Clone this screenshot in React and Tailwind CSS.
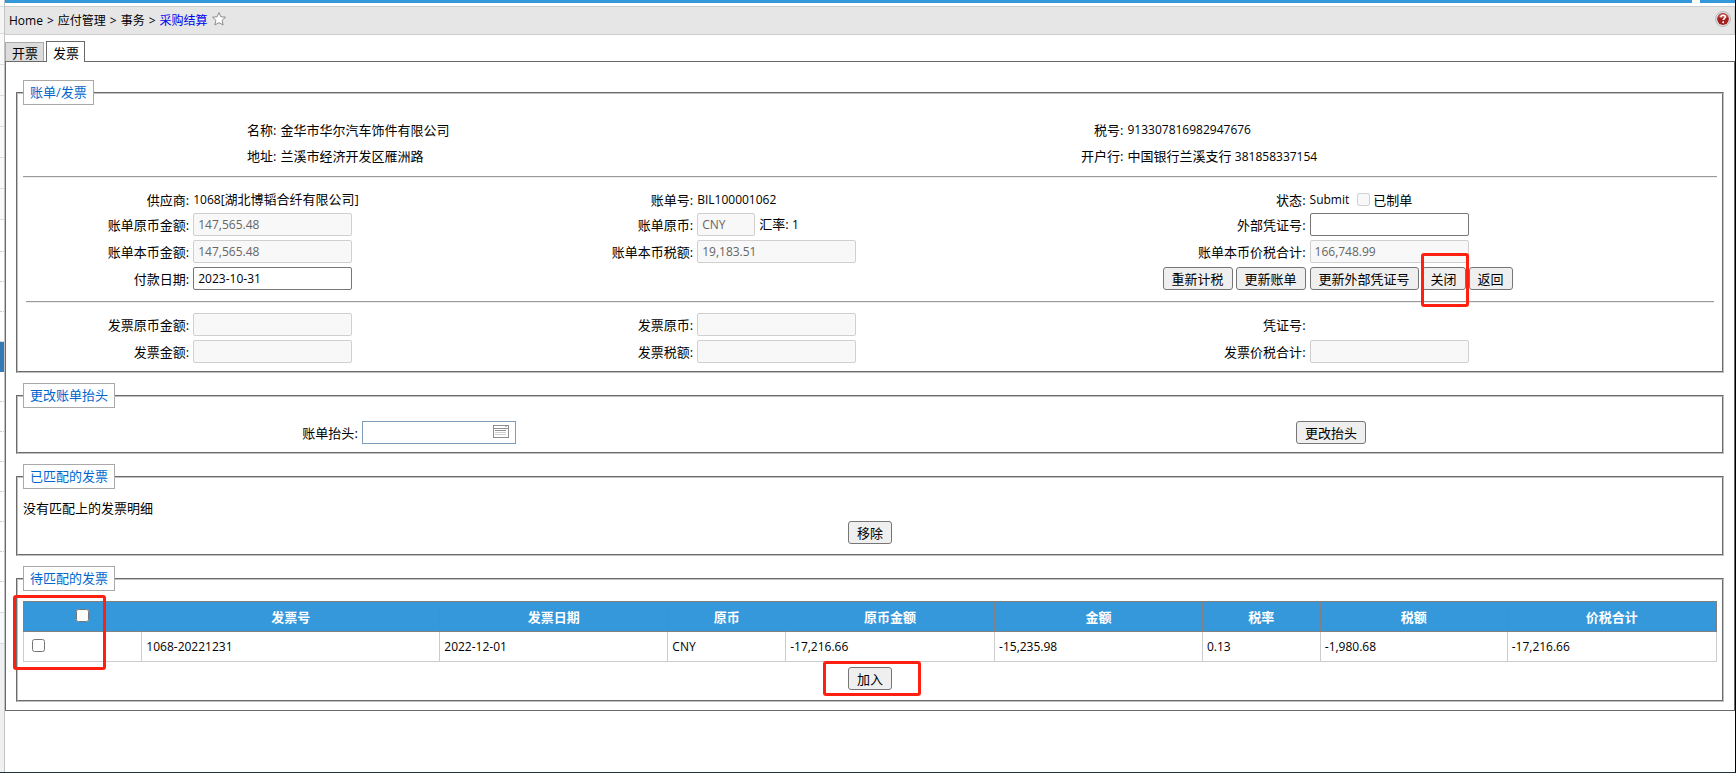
import React from "react";

const FONT = "font-['Open_Sans','Noto_Sans_CJK_SC',sans-serif]";

const COLUMNS = [
  { title: "发票号", width: "w-[17.6%]", value: "1068-20221231" },
  { title: "发票日期", width: "w-[13.47%]", value: "2022-12-01" },
  { title: "原币", width: "w-[6.96%]", value: "CNY" },
  { title: "原币金额", width: "w-[12.34%]", value: "-17,216.66" },
  { title: "金额", width: "w-[12.28%]", value: "-15,235.98" },
  { title: "税率", width: "w-[6.96%]", value: "0.13" },
  { title: "税额", width: "w-[11.04%]", value: "-1,980.68" },
  { title: "价税合计", width: "w-[12.36%]", value: "-17,216.66" },
];

function SideStrip() {
  return (
    <div aria-hidden="true" className="flex w-[5px] shrink-0 flex-col border-r border-[#c3c3c3] bg-[#f0f0f0]">
      <div className="h-[7px] border-b border-[#ddd] bg-white" />
      <div className="h-[27px] border-b border-[#ddd] bg-[#f5f5f5]" />
      {[0, 1, 2, 3, 4, 5].map((i) => (
        <div key={i} className="h-[31px] border-b border-[#ddd] bg-[#f9f9f9]" />
      ))}
      <div className="bg-white pt-0.5">
        {[0, 1, 2, 3].map((i) => (
          <div key={i} className="h-[30px] border-b border-dotted border-[#ccc]" />
        ))}
      </div>
      <div className="h-[30px] bg-[#337ab7]" />
      {[0, 1, 2, 3, 4, 5, 6].map((i) => (
        <div key={i} className="h-[30px] border-b border-dotted border-[#ccc] bg-white" />
      ))}
      <div className="h-[31px] border-b border-[#ddd] bg-white" />
      <div className="h-[31px] border-b border-[#ddd] bg-[#f9f9f9]" />
    </div>
  );
}

function StarIcon() {
  return (
    <svg viewBox="0 0 14 14" className="size-[14px]" fill="#fff" stroke="#8c8c8c" strokeLinejoin="round">
      <path d="M7 .6l1.900 4.200 4.600.4-3.400 3.100 1 4.700L7 10.600l-4.100 2.400 1-4.700L.5 5.200l4.600-.4z" />
    </svg>
  );
}

function HelpIcon() {
  return (
    <svg viewBox="0 0 16 16" className="size-4">
      <circle cx="8" cy="8" r="7.4" fill="#e9e9ec" stroke="#a9abae" strokeWidth=".9" />
      <circle cx="8" cy="8" r="5.9" fill="#a3201f" />
      <path d="M3 6a5.4 5.4 0 0 1 10 0c-2.500 1.200-7.500 1.200-10 0z" fill="#c25a58" />
      <path d="M5.900 6.300c0-1.300.9-2.100 2.200-2.100s2.200.8 2.200 1.900c0 1.500-2 1.500-2 3" fill="none" stroke="#fff" strokeWidth="1.600" />
      <circle cx="8.200" cy="11.300" r="1" fill="#fff" />
    </svg>
  );
}

function LookupIcon() {
  return (
    <svg viewBox="0 0 16 14" className="h-[14px] w-4" fill="none" shapeRendering="crispEdges">
      <path d="M.5.5h15v12H.5z" fill="#fff" stroke="#8e8e8e" />
      <path d="M1 3.500h14" stroke="#8e8e8e" />
      <path d="M12 1.500h2" stroke="#bbb" />
      <path d="M2 5.500h11" stroke="#8e8e8e" />
      <path d="M2 7.500h11M2 9.500h11" stroke="#cfcfcf" />
    </svg>
  );
}

function En({ children }) {
  return <span className="text-[12px]">{children}</span>;
}

function Button({ children }) {
  return (
    <button type="button" className="h-[23px] shrink-0 whitespace-nowrap rounded-[3px] border border-[#767676] bg-[#efefef] px-2 text-[13px] leading-5 text-black">
      {children}
    </button>
  );
}

function Marker({ className }) {
  return <div aria-hidden="true" className={`pointer-events-none absolute rounded-[3px] border-3 border-[#ff2012] ${className}`} />;
}

function TextBox({ id, width = "w-[159px]", value = "", disabled = true }) {
  return (
    <input
      id={id}
      type="text"
      defaultValue={value}
      disabled={disabled}
      className={`h-[23px] ${width} rounded-[2px] border border-[#767676] bg-white px-1 text-xs text-black disabled:border-[#d0d0d0] disabled:bg-[#f8f8f8] disabled:text-[#666]`}
    />
  );
}

function Label({ htmlFor, children }) {
  const Tag = htmlFor ? "label" : "span";
  return (
    <Tag htmlFor={htmlFor} className="whitespace-nowrap pr-1 text-right">
      {children}:
    </Tag>
  );
}

function Rule({ className }) {
  return <hr className={`h-[2px] border-t border-b border-t-[#9a9a9a] border-b-[#eee] ${className}`} />;
}

function Row({ className = "h-[27px]", children }) {
  return (
    <div className={`grid grid-cols-[10.05%_19.75%_10%_25.15%_11%_1fr] items-center ${className}`}>{children}</div>
  );
}

function Section({ title, className, children }) {
  return (
    <fieldset className={`min-w-0 border-2 border-[#c0c0c0] px-[5px] [border-style:groove] ${className}`}>
      <legend className="h-[25px] border border-[#a9a9a9] bg-white px-[6px] leading-[22px] text-[#0066cc]">{title}</legend>
      {children}
    </fieldset>
  );
}

export default function App() {
  return (
    <div className={`flex min-h-screen border-r border-b border-r-black border-b-[#1d3340] bg-white text-[13px] leading-5 text-black ${FONT}`}>
      <SideStrip />
      <div className="flex min-w-0 flex-1 flex-col">
        <div className="flex h-[3px] gap-2">
          <div className="flex-1 bg-[#3498db]" />
          <div className="w-[35px] bg-[#3498db]" />
        </div>

        <header className="mt-[3px] flex h-[29px] items-center border border-l-0 border-[#ccc] bg-[#e6e6e6] pr-[3px] pl-1">
          <nav aria-label="Breadcrumb" className="flex items-center gap-1 text-xs">
            <a href="#home" className="text-black">Home</a>
            <span>&gt;</span>
            <a href="#payables" className="text-black">应付管理</a>
            <span>&gt;</span>
            <a href="#transactions" className="text-black">事务</a>
            <span>&gt;</span>
            <a href="#settlement" className="text-[#0000ee]">采购结算</a>
          </nav>
          <button type="button" aria-label="收藏" className="mb-1 ml-1">
            <StarIcon />
          </button>
          <a href="#help" aria-label="帮助" className="mb-1 ml-auto">
            <HelpIcon />
          </a>
        </header>

        <div role="tablist" className="mt-[6px] flex items-end gap-[2px]">
          <button type="button" role="tab" aria-selected="false" className="h-[19px] border border-b-0 border-[#a9a9a9] bg-[#dcdcdc] pr-[5px] pl-[6px] leading-5">
            开票
          </button>
          <button type="button" role="tab" aria-selected="true" className="z-10 -mb-px h-[21px] border border-b-0 border-[#696969] bg-white pr-[5px] pl-[6px] leading-[22px]">
            发票
          </button>
        </div>

        <main className="flex flex-col gap-[10px] border border-[#696969] px-[10px] pt-[18px] pb-2">
          <Section title="账单/发票" className="pb-[6px]">
            <div className="mt-3 grid grid-cols-[15.2%_35%_15%_1fr] leading-[26px]">
              <Label>名称</Label>
              <span>金华市华尔汽车饰件有限公司</span>
              <Label>税号</Label>
              <En>913307816982947676</En>
              <Label>地址</Label>
              <span>兰溪市经济开发区雁洲路</span>
              <Label>开户行</Label>
              <span>
                中国银行兰溪支行 <En>381858337154</En>
              </span>
            </div>
            <Rule className="mt-[6px]" />

            <Row className="mt-[10px] h-[23px]">
              <Label>供应商</Label>
              <span className="whitespace-nowrap">
                <En>1068[</En>湖北博韬合纤有限公司<En>]</En>
              </span>
              <Label>账单号</Label>
              <En>BIL100001062</En>
              <Label>状态</Label>
              <span className="flex items-center">
                <En>Submit</En>
                <input id="voucherMade" type="checkbox" disabled className="mr-[3px] ml-2 size-[13px]" />
                <label htmlFor="voucherMade">已制单</label>
              </span>
            </Row>
            <Row>
              <Label htmlFor="billAmount">账单原币金额</Label>
              <TextBox id="billAmount" value="147,565.48" />
              <Label htmlFor="billCurrency">账单原币</Label>
              <span className="flex items-center gap-1">
                <TextBox id="billCurrency" value="CNY" width="w-[58px]" />
                <span>
                  汇率: <En>1</En>
                </span>
              </span>
              <Label htmlFor="externalVoucher">外部凭证号</Label>
              <TextBox id="externalVoucher" disabled={false} />
            </Row>
            <Row>
              <Label htmlFor="billLocalAmount">账单本币金额</Label>
              <TextBox id="billLocalAmount" value="147,565.48" />
              <Label htmlFor="billLocalTax">账单本币税额</Label>
              <TextBox id="billLocalTax" value="19,183.51" />
              <Label htmlFor="billLocalTotal">账单本币价税合计</Label>
              <TextBox id="billLocalTotal" value="166,748.99" />
            </Row>
            <Row>
              <Label htmlFor="payDate">付款日期</Label>
              <TextBox id="payDate" value="2023-10-31" disabled={false} />
              <span />
              <span />
              <span className="flex justify-end gap-[3px] pr-1">
                <Button>重新计税</Button>
                <Button>更新账单</Button>
              </span>
              <span className="flex gap-[3px]">
                <Button>更新外部凭证号</Button>
                <span className="relative flex">
                  <Button>关闭</Button>
                  <Marker className="-top-[14px] -right-[3px] -bottom-[17px] -left-px" />
                </span>
                <Button>返回</Button>
              </span>
            </Row>
            <Rule className="mx-[3px] mt-[9px] mb-2" />
            <Row>
              <Label htmlFor="invoiceAmount">发票原币金额</Label>
              <TextBox id="invoiceAmount" />
              <Label htmlFor="invoiceCurrency">发票原币</Label>
              <TextBox id="invoiceCurrency" />
              <Label>凭证号</Label>
              <span />
            </Row>
            <Row>
              <Label htmlFor="invoiceLocal">发票金额</Label>
              <TextBox id="invoiceLocal" />
              <Label htmlFor="invoiceTax">发票税额</Label>
              <TextBox id="invoiceTax" />
              <Label htmlFor="invoiceTotal">发票价税合计</Label>
              <TextBox id="invoiceTotal" />
            </Row>
          </Section>

          <Section title="更改账单抬头" className="pb-[6px]">
            <div className="mt-[11px] grid h-[27px] grid-cols-[20%_55.15%_1fr] items-center">
              <Label htmlFor="billHeader">账单抬头</Label>
              <div className="flex h-[23px] w-[154px] items-center border border-[#7f9db9] pr-[6px]">
                <input id="billHeader" type="text" className="min-w-0 flex-1 px-1 text-xs outline-none" />
                <button type="button" aria-label="选择抬头" className="mb-px">
                  <LookupIcon />
                </button>
              </div>
              <span className="flex">
                <Button>更改抬头</Button>
              </span>
            </div>
          </Section>

          <Section title="已匹配的发票" className="pb-[10px]">
            <p className="mt-[6px] leading-[26px]">没有匹配上的发票明细</p>
            <div className="flex justify-center">
              <Button>移除</Button>
            </div>
          </Section>

          <Section title="待匹配的发票" className="pb-[10px]">
            <div className="relative mt-[10px]">
              <table className="w-full table-fixed border-collapse">
                <thead>
                  <tr className="h-[30px] bg-[#3498db] text-white">
                    <th scope="col" className="w-[6.99%] border border-[#808080] p-0 leading-none">
                      <input type="checkbox" aria-label="全选" className="mb-[3px] size-[13px] align-middle" />
                    </th>
                    {COLUMNS.map((column) => (
                      <th key={column.title} scope="col" className={`${column.width} border border-[#808080] p-0 font-bold`}>
                        {column.title}
                      </th>
                    ))}
                  </tr>
                </thead>
                <tbody>
                  <tr className="h-[30px]">
                    <td className="border border-[#ccc] py-0 pr-0 pl-2 leading-none">
                      <input type="checkbox" aria-label="选择 1068-20221231" className="mb-[2px] size-[13px] align-middle" />
                    </td>
                    {COLUMNS.map((column) => (
                      <td key={column.title} className="border border-[#ccc] px-1 py-0 text-xs">
                        {column.value}
                      </td>
                    ))}
                  </tr>
                </tbody>
              </table>
              <Marker className="-top-[6px] -left-[10px] h-[75px] w-[93px]" />
            </div>
            <div className="mt-[5px] flex justify-center">
              <span className="relative flex">
                <Button>加入</Button>
                <Marker className="-top-[6px] -right-[29px] -bottom-[6px] -left-[25px]" />
              </span>
            </div>
          </Section>
        </main>
      </div>
    </div>
  );
}
